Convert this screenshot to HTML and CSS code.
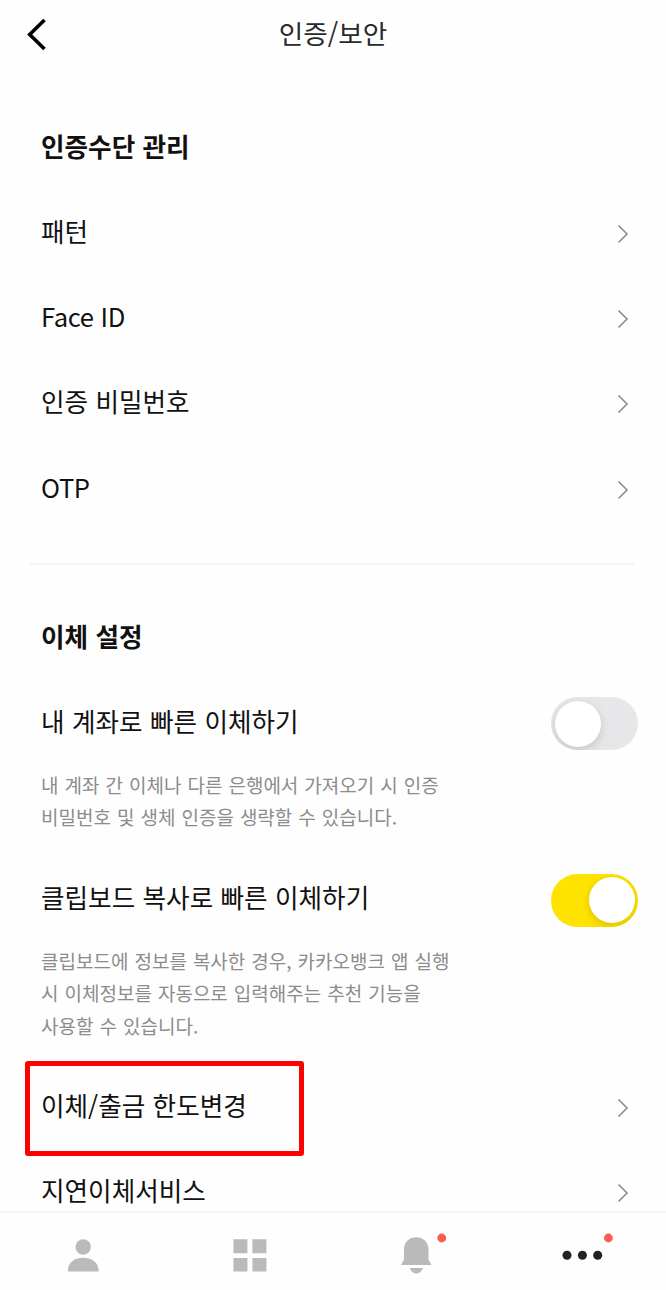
FILE: index.html
```
<!DOCTYPE html>
<html lang="ko">
<head>
    <meta charset="UTF-8">
    <title>인증/보안</title>
    <link rel="stylesheet" href="styles.css">
</head>
<body>
    <div id="page-container">
        <header class="top-bar">
            <svg class="back" viewBox="0 0 24 36"><path d="M19.5 4 L4.7 18.5 L19.5 33"/></svg>
            <h1>인증/보안</h1>
        </header>

        <main class="content">
            <section class="group">
                <h2>인증수단 관리</h2>
                <div class="row">
                    <span>패턴</span>
                    <svg class="arrow" viewBox="0 0 12 20"><path d="M1.5 1.5 L10 10 L1.5 18.5"/></svg>
                </div>
                <div class="row">
                    <span class="latin">Face ID</span>
                    <svg class="arrow" viewBox="0 0 12 20"><path d="M1.5 1.5 L10 10 L1.5 18.5"/></svg>
                </div>
                <div class="row">
                    <span>인증 비밀번호</span>
                    <svg class="arrow" viewBox="0 0 12 20"><path d="M1.5 1.5 L10 10 L1.5 18.5"/></svg>
                </div>
                <div class="row">
                    <span class="latin">OTP</span>
                    <svg class="arrow" viewBox="0 0 12 20"><path d="M1.5 1.5 L10 10 L1.5 18.5"/></svg>
                </div>
            </section>

            <hr>

            <section class="group">
                <h2>이체 설정</h2>
                <div class="row row-switch">
                    <span>내 계좌로 빠른 이체하기</span>
                    <div class="switch"><div class="knob"></div></div>
                </div>
                <p>내 계좌 간 이체나 다른 은행에서 가져오기 시 인증<br>비밀번호 및 생체 인증을 생략할 수 있습니다.</p>
                <div class="row row-switch">
                    <span>클립보드 복사로 빠른 이체하기</span>
                    <div class="switch on"><div class="knob"></div></div>
                </div>
                <p>클립보드에 정보를 복사한 경우, 카카오뱅크 앱 실행<br>시 이체정보를 자동으로 입력해주는 추천 기능을<br>사용할 수 있습니다.</p>
                <div class="row marked">
                    <span>이체/출금 한도변경</span>
                    <svg class="arrow" viewBox="0 0 12 20"><path d="M1.5 1.5 L10 10 L1.5 18.5"/></svg>
                </div>
                <div class="row">
                    <span>지연이체서비스</span>
                    <svg class="arrow" viewBox="0 0 12 20"><path d="M1.5 1.5 L10 10 L1.5 18.5"/></svg>
                </div>
            </section>
        </main>

        <nav class="tab-bar">
            <svg viewBox="0 0 60 60">
                <circle cx="30.2" cy="22" r="7.7"/>
                <path d="M14.8 46.4 C14.8 38 21 32.8 30.2 32.8 C39.5 32.8 45.7 38 45.7 46.4 Z"/>
            </svg>
            <svg viewBox="0 0 60 60">
                <path d="M13.4 14.2h14v14h-14z M32.4 14.2h14v14h-14z M13.4 33h14v13.6h-14z M32.4 33h14v13.6h-14z"/>
            </svg>
            <svg viewBox="0 0 60 60">
                <path d="M15 40 L18 34.5 V24.5 C18 17 23.5 12.3 30.2 12.3 C37 12.3 42.5 17 42.5 24.5 V34.5 L45.5 40 Z"/>
                <path d="M23.7 43 H37 C35.5 46.5 33.3 48.4 30.3 48.4 C27.3 48.4 25 46.5 23.7 43 Z"/>
                <circle class="badge" cx="55.7" cy="13" r="4.4"/>
            </svg>
            <svg viewBox="0 0 60 60">
                <g class="dots">
                    <circle cx="14" cy="30.2" r="4.5"/>
                    <circle cx="29.4" cy="30.2" r="4.5"/>
                    <circle cx="44.7" cy="30.2" r="4.5"/>
                </g>
                <circle class="badge" cx="55.4" cy="13" r="4.4"/>
            </svg>
        </nav>
    </div>
</body>
</html>
```
FILE: styles.css
```
body {
    margin: 0;
    font-family: "Noto Sans CJK KR", sans-serif;
    font-size: 25.6px;
    color: #111;
    background-color: #fefefe;
}

#page-container {
    display: flex;
    flex-direction: column;
    height: 1290px;
    overflow: hidden;
}

.top-bar {
    display: grid;
    grid-template-columns: 60px 1fr 60px;
    align-items: center;
    flex: none;
    height: 68px;
}

.back {
    width: 24px;
    height: 36px;
    margin-left: 25px;
    fill: none;
    stroke: #000;
    stroke-width: 3.6;
}

h1 {
    margin: 0 0 2px;
    font-size: 26.6px;
    font-weight: 400;
    line-height: 38px;
    text-align: center;
    color: #2a2a2a;
}

.content {
    flex: 1;
    min-height: 0;
    overflow: hidden;
}

.group {
    padding: 59px 28px 0 41px;
}

h2 {
    margin: 0 0 26px;
    font-size: 25.6px;
    font-weight: 700;
    line-height: 38px;
    word-spacing: 0.2px;
}

.row {
    display: flex;
    justify-content: space-between;
    align-items: center;
    position: relative;
    height: 85.3px;
    word-spacing: 0.2px;
}

.row span {
    line-height: 38px;
    padding-bottom: 6px;
}

.row .latin {
    letter-spacing: -0.4px;
}

.arrow {
    width: 12px;
    height: 20px;
    margin-right: 9px;
    fill: none;
    stroke: #888;
    stroke-width: 1.5;
}

hr {
    height: 2px;
    margin: 31px 32px 0 30px;
    border: 0;
    background-color: #f3f3f3;
}

hr + .group {
    padding-top: 52px;
}

hr + .group h2 {
    margin-bottom: 24.5px;
}

.row-switch {
    height: 88px;
}

.switch {
    box-sizing: border-box;
    display: flex;
    width: 87px;
    height: 53px;
    padding: 3.5px;
    border-radius: 27px;
    background-color: #e7e7e9;
    overflow: hidden;
}

.switch.on {
    justify-content: flex-end;
    background-color: #ffe300;
}

.knob {
    width: 46px;
    height: 46px;
    border-radius: 50%;
    background-color: #fff;
    box-shadow: 0 3px 10px rgba(0, 0, 0, 0.15);
}

p {
    margin: 0 0 22.9px;
    padding-top: 1px;
    font-size: 19px;
    line-height: 32.3px;
    word-spacing: 0.7px;
    color: #8c8c8c;
}

/* red frame around the limit change item */
.marked::after {
    content: "";
    box-sizing: border-box;
    position: absolute;
    top: -4px;
    left: -16px;
    width: 279px;
    height: 95px;
    border: 5px solid #f00;
    border-radius: 3px;
}

.tab-bar {
    display: grid;
    grid-template-columns: repeat(4, 1fr);
    justify-items: center;
    flex: none;
    box-sizing: border-box;
    height: 79px;
    padding-top: 12px;
    border-top: 2px solid #f5f5f5;
    background-color: #fefefe;
}

.tab-bar svg {
    width: 60px;
    height: 60px;
    fill: #bababa;
}

.tab-bar .dots {
    fill: #222;
}

.tab-bar .badge {
    fill: #fa5c50;
}
```
